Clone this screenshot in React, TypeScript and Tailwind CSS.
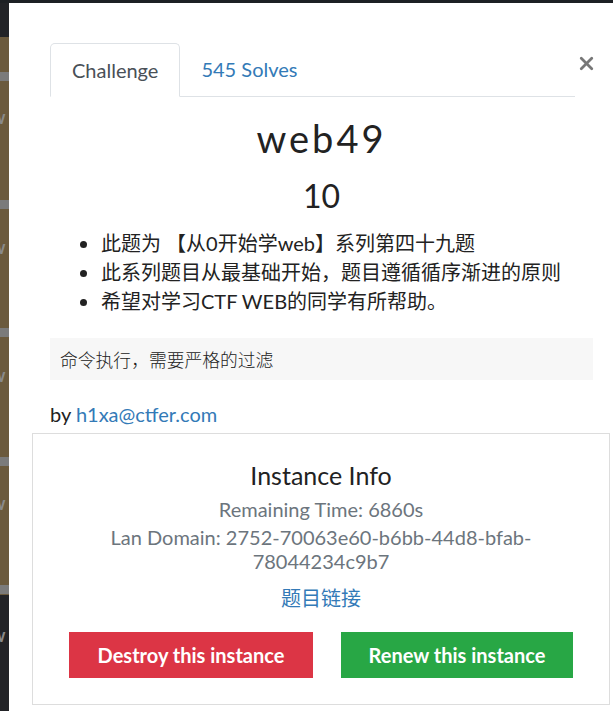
import { X } from 'lucide-react';

const lato = { fontFamily: 'Lato, "Noto Sans CJK SC", sans-serif' };

function SideStrip() {
  const bars = [72, 200, 328, 457, 585];
  return (
    <div className="relative w-[9px] flex-none overflow-hidden bg-[#222327]">
      <div className="absolute left-0 top-[34px] h-[558px] w-[9px] bg-[#6b5a3d]" />
      {bars.map((y) => (
        <div key={y} className="absolute left-0 h-[9px] w-[9px] bg-[#7b7b7b]" style={{ top: y - 3 }} />
      ))}
      {[108, 238, 366, 494, 626].map((y) => (
        <span
          key={y}
          className="absolute left-[-9px] text-[18px] font-bold leading-none text-[#8a8a8a]"
          style={{ top: y - 3, ...lato }}
        >
          w
        </span>
      ))}
    </div>
  );
}

export default function App() {
  return (
    <div className="flex h-[711px] w-[613px] flex-col overflow-hidden bg-[#1d2024]" style={lato}>
      <div className="h-[3px] flex-none bg-[#1d2024]" />
      <div className="flex min-h-0 flex-1">
        <SideStrip />
        <div className="flex-1 bg-white pl-[41px] pt-[40px]">
          <div className="flex items-start">
            <div className="flex w-[525px] border-b border-[#dee2e6]">
              <div className="-mb-px rounded-t-[5px] border border-b-white border-[#dee2e6] bg-white px-[21px] py-[13px] text-[20px] leading-[26px] text-[#495057]">
                Challenge
              </div>
              <div className="px-[21px] py-[13px] text-[20px] leading-[26px] text-[#337ab7]">545 Solves</div>
            </div>
            <X className="ml-[1px] mt-[10px] h-[21px] w-[21px] text-[#777]" strokeWidth={3.2} />
          </div>

          <div className="flex w-[543px] flex-col">
            <div className="mt-[19px] text-center text-[38px] font-normal leading-[1.2] tracking-[0.08em] text-[#222]">
              web49
            </div>
            <div className="mt-[15px] text-center text-[32px] leading-[1.2] text-[#222]">10</div>

            <ul className="mt-[14px] list-disc pl-[50px] text-[20px] leading-[29px] text-[#222]">
              <li className="pl-[1px]">此题为 【从0开始学web】系列第四十九题</li>
              <li className="pl-[1px]">此系列题目从最基础开始，题目遵循循序渐进的原则</li>
              <li className="pl-[1px]">希望对学习CTF WEB的同学有所帮助。</li>
            </ul>

            <div
              className="mt-[22px] flex h-[42px] items-center bg-[#f7f7f7] px-[10px] text-[17.8px] text-[#222]"
              style={{ fontFamily: '"Noto Sans CJK SC", monospace' }}
            >
              <span className="font-light">命令执行，需要严格的过滤</span>
            </div>

            <div className="mt-[22px] text-[20px] leading-[24px] text-[#222]">
              by <span className="text-[#337ab7]">h1xa@ctfer.com</span>
            </div>

            <div className="-ml-[18px] mt-[7px] flex h-[272px] w-[578px] flex-col items-center border border-[#dddddd] pt-[24px]">
              <div className="text-[25px] leading-[34px] text-[#222]">Instance Info</div>
              <div className="mt-[3px] text-[20px] leading-[28px] text-[#6c757d]">Remaining Time: 6860s</div>
              <div className="mt-[2px] w-[440px] text-center text-[20px] leading-[24px] text-[#6c757d]">
                Lan Domain: 2752-70063e60-b6bb-44d8-bfab-78044234c9b7
              </div>
              <div className="mt-[12px] text-[20px] leading-[26px] text-[#337ab7]">题目链接</div>
              <div className="mt-[21px] flex gap-[28px]">
                <div className="flex h-[46px] w-[244px] items-center justify-center bg-[#dc3545] text-[20px] font-bold text-white">
                  Destroy this instance
                </div>
                <div className="flex h-[46px] w-[232px] items-center justify-center bg-[#28a745] text-[20px] font-bold text-white">
                  Renew this instance
                </div>
              </div>
            </div>
          </div>
        </div>
      </div>
    </div>
  );
}
